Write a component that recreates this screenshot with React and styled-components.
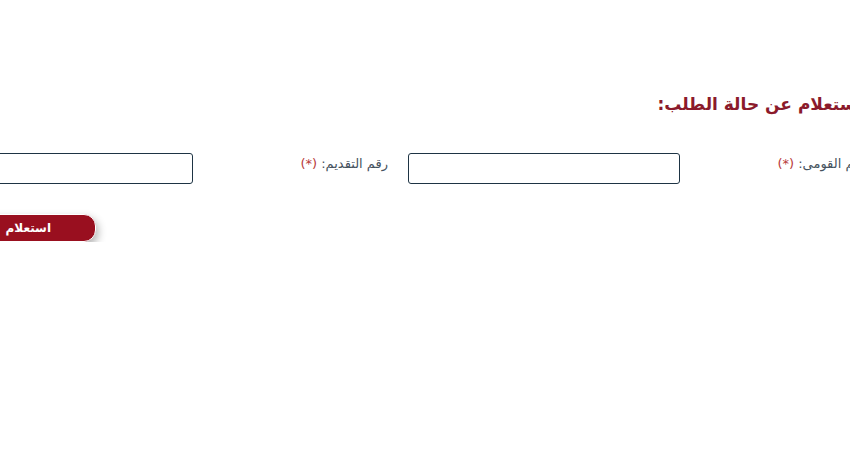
import React from 'react'
import styled, { createGlobalStyle } from 'styled-components'

const GlobalStyle = createGlobalStyle`
  html, body {
    margin: 0;
    padding: 0;
    background: #fff;
    overflow: hidden;
  }
  body {
    font-family: "DejaVu Sans", "Noto Sans", sans-serif;
  }
`

// the form is wider than the frame, so both sides run off the edges
const Page = styled.div`
  direction: rtl;
  width: 974px;
  margin-left: -79px;
  padding-top: 92px;
`

const Title = styled.h3`
  margin: 0 20px 0 0;
  font-size: 17px;
  font-weight: bold;
  color: #8b1a2b;
  line-height: 24px;
`

const Form = styled.form`
  margin-top: 37px;
  display: grid;
  grid-template-columns: 215px 272px 215px 272px;
  row-gap: 30px;
`

const Label = styled.label`
  padding: 2px 20px 0 20px;
  font-size: 13px;
  line-height: 18px;
  color: #45525e;
`

const Required = styled.span`
  color: #b83a3a;
`

const Input = styled.input`
  box-sizing: border-box;
  width: 100%;
  height: 31px;
  border: 1px solid #1e3444;
  border-radius: 3px;
  background: #fff;
  outline: none;
`

const Submit = styled.button`
  grid-column: 4;
  justify-self: end;
  display: flex;
  justify-content: flex-start;
  align-items: center;
  width: 175px;
  height: 28px;
  padding: 0 44px 0 0;
  border: 1px solid #fff;
  border-radius: 12px;
  background: #990f1f;
  color: #fff;
  font-family: "DejaVu Sans", sans-serif;
  font-size: 12px;
  font-weight: bold;
  box-shadow: 2px 4px 8px rgba(0, 0, 0, 0.3);
  cursor: pointer;
`

export default function App() {
  return (
    <>
      <GlobalStyle />
      <Page>
        <Title>الاستعلام عن حالة الطلب:</Title>
        <Form onSubmit={e => e.preventDefault()}>
          <Label>
            الرقم القومى: <Required>(*)</Required>
          </Label>
          <Input type="text" />
          <Label>
            رقم التقديم: <Required>(*)</Required>
          </Label>
          <Input type="text" />
          <Submit type="submit">استعلام</Submit>
        </Form>
      </Page>
    </>
  )
}
